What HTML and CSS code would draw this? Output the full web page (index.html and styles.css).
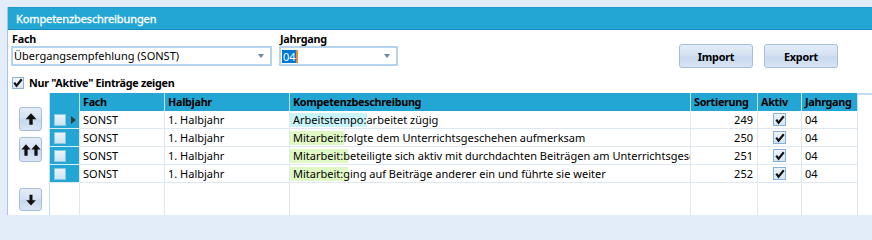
FILE: index.html
```html
<!DOCTYPE html>
<html lang="de">
<head>
<meta charset="utf-8">
<title>Kompetenzbeschreibungen</title>
<link rel="stylesheet" href="styles.css">
</head>
<body>
<div class="frame">
  <div class="title">Kompetenzbeschreibungen</div>
  <div class="form">
    <div class="field">
      <label class="lbl">Fach</label>
      <div class="combo combo-fach"><span class="ctext">Übergangsempfehlung (SONST)</span><span class="arrow"></span></div>
    </div>
    <div class="field">
      <label class="lbl">Jahrgang</label>
      <div class="combo combo-jg"><span class="ctext"><span class="sel">04</span><span class="caret"></span></span><span class="arrow"></span></div>
    </div>
    <div class="buttons">
      <button class="btn">Import</button>
      <button class="btn">Export</button>
    </div>
  </div>
  <div class="filter">
    <span class="cb"><svg width="10" height="10" viewBox="0 0 10 10"><path d="M0.4 5.3 L3.5 9.4 L9.6 1.9 L7.9 0.5 L3.6 5.9 L2.1 3.9 Z" fill="#111"/></svg></span>
    <span class="flabel">Nur "Aktive" Einträge zeigen</span>
  </div>
  <div class="lower">
    <div class="side">
      <button class="abtn a1"><svg width="12" height="12" viewBox="0 0 12 12"><path d="M6 0.3 L11.5 6.3 L7.7 6.3 L7.7 11.7 L4.3 11.7 L4.3 6.3 L0.5 6.3 Z" fill="#111"/></svg></button>
      <button class="abtn a2"><svg width="20" height="12" viewBox="0 0 20 12"><path d="M5 0.3 L9.6 5.6 L6.6 5.6 L6.6 11.7 L3.4 11.7 L3.4 5.6 L0.4 5.6 Z" fill="#111"/><path d="M15 0.3 L19.6 5.6 L16.6 5.6 L16.6 11.7 L13.4 11.7 L13.4 5.6 L10.4 5.6 Z" fill="#111"/></svg></button>
      <button class="abtn a3"><svg width="12" height="12" viewBox="0 0 12 12"><path d="M4.5 0.8 L7.5 0.8 L7.5 6.3 L10.8 6.3 L6 11.5 L1.2 6.3 L4.5 6.3 Z" fill="#111"/></svg></button>
    </div>
    <div class="gridwrap">
      <div class="grid">
        <div class="hc ind"></div>
        <div class="hc">Fach</div>
        <div class="hc">Halbjahr</div>
        <div class="hc">Kompetenzbeschreibung</div>
        <div class="hc">Sortierung</div>
        <div class="hc">Aktiv</div>
        <div class="hc">Jahrgang</div>

        <div class="c ind"><span class="ibox"></span><span class="tri"></span></div>
        <div class="c">SONST</div>
        <div class="c">1. Halbjahr</div>
        <div class="c komp"><span class="tag tag-a">Arbeitstempo:</span>arbeitet zügig</div>
        <div class="c num">249</div>
        <div class="c ctr"><span class="chk"><svg width="10" height="10" viewBox="0 0 10 10"><path d="M0.4 5.3 L3.5 9.4 L9.6 1.9 L7.9 0.5 L3.6 5.9 L2.1 3.9 Z" fill="#111"/></svg></span></div>
        <div class="c">04</div>

        <div class="c ind"><span class="ibox"></span></div>
        <div class="c">SONST</div>
        <div class="c">1. Halbjahr</div>
        <div class="c komp"><span class="tag tag-m">Mitarbeit:</span>folgte dem Unterrichtsgeschehen aufmerksam</div>
        <div class="c num">250</div>
        <div class="c ctr"><span class="chk"><svg width="10" height="10" viewBox="0 0 10 10"><path d="M0.4 5.3 L3.5 9.4 L9.6 1.9 L7.9 0.5 L3.6 5.9 L2.1 3.9 Z" fill="#111"/></svg></span></div>
        <div class="c">04</div>

        <div class="c ind"><span class="ibox"></span></div>
        <div class="c">SONST</div>
        <div class="c">1. Halbjahr</div>
        <div class="c komp"><span class="tag tag-m wide">Mitarbeit:</span>beteiligte sich aktiv mit durchdachten Beiträgen am Unterrichtsgeschehen</div>
        <div class="c num">251</div>
        <div class="c ctr"><span class="chk"><svg width="10" height="10" viewBox="0 0 10 10"><path d="M0.4 5.3 L3.5 9.4 L9.6 1.9 L7.9 0.5 L3.6 5.9 L2.1 3.9 Z" fill="#111"/></svg></span></div>
        <div class="c">04</div>

        <div class="c ind"><span class="ibox"></span></div>
        <div class="c">SONST</div>
        <div class="c">1. Halbjahr</div>
        <div class="c komp"><span class="tag tag-m wide">Mitarbeit:</span>ging auf Beiträge anderer ein und führte sie weiter</div>
        <div class="c num">252</div>
        <div class="c ctr"><span class="chk"><svg width="10" height="10" viewBox="0 0 10 10"><path d="M0.4 5.3 L3.5 9.4 L9.6 1.9 L7.9 0.5 L3.6 5.9 L2.1 3.9 Z" fill="#111"/></svg></span></div>
        <div class="c">04</div>

        <div class="f"></div>
        <div class="f"></div>
        <div class="f"></div>
        <div class="f"></div>
        <div class="f"></div>
        <div class="f"></div>
        <div class="f"></div>
      </div>
      <div class="filler"></div>
    </div>
  </div>
</div>
</body>
</html>
```
FILE: styles.css
```css
* { box-sizing: border-box; }
html { background: #e3edf9; }
html, body { margin: 0; padding: 0; }
body {
  width: 872px;
  height: 215px;
  overflow: hidden;
  padding: 7px 0 0 7px;
  background: #e3edf9;
  font-family: "Noto Sans", "Open Sans", sans-serif;
  font-size: 11px;
  color: #000;
}
.frame {
  height: 208px;
  background: #fff;
  border-left: 1px solid #a9c6e3;
  display: flex;
  flex-direction: column;
}
.title {
  height: 23px;
  background: #24a6d4;
  border-top: 1px solid #1f9dca;
  border-bottom: 1px solid #168abb;
  color: #fff;
  font-size: 11px;
  letter-spacing: -0.1px;
  line-height: 21px;
  padding-left: 8px;
  flex: none;
  -webkit-text-stroke: 0.3px #fff;
}
.form {
  display: flex;
  padding: 2px 0 0 3px;
  flex: none;
}
.field { display: flex; flex-direction: column; margin-right: 7px; }
.lbl {
  font-weight: bold;
  font-size: 10.8px;
  letter-spacing: -0.25px;
  line-height: 14px;
  height: 14px;
  padding-left: 1px;
}
.combo {
  height: 20px;
  border: 2px solid #b4d4ee;
  display: flex;
  align-items: center;
  padding-left: 1px;
}
.combo-fach { width: 261px; }
.combo-jg { width: 119px; }
.ctext { flex: 1; display: flex; align-items: center; line-height: 14px; }
.sel { background: #0078d7; color: #fff; padding: 0 0 0 1px; line-height: 13px; }
.caret { width: 2px; height: 13px; background: #f08a24; }
.arrow {
  width: 0; height: 0;
  border-left: 3.5px solid transparent;
  border-right: 3.5px solid transparent;
  border-top: 4px solid #6f83a3;
  margin-right: 6px;
}
.buttons {
  margin-left: auto;
  margin-right: 34px;
  margin-top: 12px;
  display: flex;
  gap: 11px;
}
.btn {
  width: 74px;
  height: 24px;
  border: 1px solid #a4bedc;
  border-radius: 3px;
  background: linear-gradient(#e4edf8 0%, #d5e2f2 45%, #c8d8ee 55%, #d9e5f4 100%);
  font-family: inherit;
  font-size: 10.8px;
  letter-spacing: -0.2px;
  font-weight: bold;
  color: #000;
  padding: 0;
}
.filter {
  display: flex;
  align-items: center;
  height: 13px;
  margin-top: 8px;
  padding-left: 4px;
  flex: none;
}
.cb {
  width: 12px; height: 12px;
  border: 1px solid #8fb1d6;
  background: linear-gradient(#f2f6fb, #dbe6f2);
  display: flex; align-items: center; justify-content: center;
}
.flabel {
  font-weight: bold;
  font-size: 10.8px;
  letter-spacing: -0.3px;
  margin-left: 5px;
  line-height: 13px;
}
.lower {
  display: flex;
  margin-top: 4px;
  flex: 1;
  min-height: 0;
}
.side {
  width: 42px;
  flex: none;
  display: flex;
  flex-direction: column;
  padding: 14px 0 0 11px;
  border-right: 1px solid #c9ddef;
}
.abtn {
  width: 23px;
  height: 24px;
  border: 1px solid #a4bedc;
  border-radius: 3px;
  background: linear-gradient(#e4edf8 0%, #d5e2f2 45%, #c8d8ee 55%, #d9e5f4 100%);
  padding: 0;
  display: flex; align-items: center; justify-content: center;
}
.a2 { margin-top: 6px; height: 25px; }
.a3 { margin-top: 26px; height: 23px; }
.gridwrap { flex: 1; display: flex; }
.grid {
  display: grid;
  grid-template-columns: 30px 85px 125px 401px 67px 44px 56px;
  grid-template-rows: 18px 18px 18px 18px 18px 1fr;
  width: 808px;
}
.filler { flex: 1; border-top: 2px solid #c4dcef; }
.hc {
  background: #24a6d4;
  border-right: 1px solid #bde2f2;
  font-weight: bold;
  font-size: 10.8px;
  letter-spacing: -0.3px;
  padding-left: 3px;
  line-height: 18px;
  white-space: nowrap;
  overflow: hidden;
}
.hc:last-child { border-right: none; }
.c {
  border-right: 1px solid #dfe8f1;
  border-bottom: 1px solid #dfe8f1;
  padding-left: 3px;
  line-height: 17px;
  white-space: nowrap;
  overflow: hidden;
}
.c.ind {
  background: #24a6d4;
  border-bottom: 1px solid #d9eef8;
  border-right: 1px solid #dfe8f1;
  padding-left: 4px;
  display: flex;
  align-items: center;
}
.ibox {
  width: 12px; height: 12px;
  border: 1px solid #8cc8e4;
  background: linear-gradient(#eaf5fb, #c9e4f2);
}
.tri {
  width: 0; height: 0;
  border-top: 4px solid transparent;
  border-bottom: 4px solid transparent;
  border-left: 5px solid #3a3a3a;
  margin-left: 5px;
}
.komp { padding-left: 0; display: flex; align-items: center; }
.tag { padding: 0 0 0 3px; line-height: 14px; }
.tag-a { background: #c8f4fa; box-shadow: 1px 0 0 #c8f4fa; }
.tag-m { background: #e0f8c4; box-shadow: 1px 0 0 #e0f8c4; }
.tag-m.wide { box-shadow: 5px 0 0 #e0f8c4; }
.num { text-align: right; padding-right: 4px; }
.ctr { display: flex; align-items: center; justify-content: center; padding-left: 0; }
.chk {
  width: 13px; height: 13px;
  border: 1px solid #86b2dc;
  background: linear-gradient(#edf4fb, #d4e5f5);
  display: flex; align-items: center; justify-content: center;
}
.f { border-right: 1px solid #dfe8f1; }
```
